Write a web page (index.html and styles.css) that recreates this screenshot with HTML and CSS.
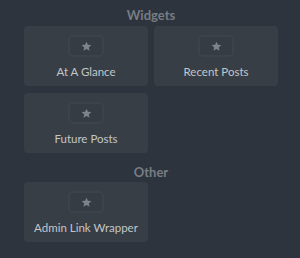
FILE: index.html
```html
<!DOCTYPE html>
<html>
<head>
<meta charset="utf-8">
<link rel="stylesheet" href="styles.css">
</head>
<body>
<div class="panel">
  <h2 class="heading heading-first">Widgets</h2>
  <div class="grid">
    <div class="card">
      <div class="icon-box"><svg class="star" viewBox="0 0 10 10"><path d="M5 0.6 L6.3 3.4 L9.4 3.7 L7.1 5.8 L7.8 8.9 L5 7.3 L2.2 8.9 L2.9 5.8 L0.6 3.7 L3.7 3.4 Z"/></svg></div>
      <div class="label">At A Glance</div>
    </div>
    <div class="card">
      <div class="icon-box"><svg class="star" viewBox="0 0 10 10"><path d="M5 0.6 L6.3 3.4 L9.4 3.7 L7.1 5.8 L7.8 8.9 L5 7.3 L2.2 8.9 L2.9 5.8 L0.6 3.7 L3.7 3.4 Z"/></svg></div>
      <div class="label">Recent Posts</div>
    </div>
    <div class="card">
      <div class="icon-box"><svg class="star" viewBox="0 0 10 10"><path d="M5 0.6 L6.3 3.4 L9.4 3.7 L7.1 5.8 L7.8 8.9 L5 7.3 L2.2 8.9 L2.9 5.8 L0.6 3.7 L3.7 3.4 Z"/></svg></div>
      <div class="label">Future Posts</div>
    </div>
  </div>
  <h2 class="heading heading-next">Other</h2>
  <div class="grid">
    <div class="card">
      <div class="icon-box"><svg class="star" viewBox="0 0 10 10"><path d="M5 0.6 L6.3 3.4 L9.4 3.7 L7.1 5.8 L7.8 8.9 L5 7.3 L2.2 8.9 L2.9 5.8 L0.6 3.7 L3.7 3.4 Z"/></svg></div>
      <div class="label">Admin Link Wrapper</div>
    </div>
  </div>
</div>
</body>
</html>
```
FILE: styles.css
```css
html, body {
  margin: 0;
  padding: 0;
  background: #2d343d;
  width: 300px;
  height: 258px;
  overflow: hidden;
}
.panel {
  width: 254px;
  margin-left: 24px;
  font-family: Lato, "Open Sans", sans-serif;
}
.heading {
  margin: 0;
  font-size: 13px;
  line-height: 16px;
  font-weight: 700;
  color: #767d85;
  text-align: center;
}
.heading-first {
  padding: 7px 0 3px;
}
.heading-next {
  padding: 11px 0 2px;
}
.grid {
  display: grid;
  grid-template-columns: 124px 124px;
  gap: 7px 6px;
}
.card {
  height: 60px;
  background: #383e45;
  border-radius: 4px;
  display: flex;
  flex-direction: column;
  align-items: center;
  padding-top: 9px;
  box-sizing: border-box;
}
.icon-box {
  width: 36px;
  height: 22px;
  box-sizing: border-box;
  border: 2px solid #3d434a;
  background: #363c43;
  border-radius: 5px;
  display: flex;
  align-items: center;
  justify-content: center;
}
.star {
  width: 11px;
  height: 11px;
  fill: #7d838b;
}
.label {
  margin-top: 8px;
  font-size: 11.5px;
  line-height: 14px;
  color: #c2c6ca;
}
```
